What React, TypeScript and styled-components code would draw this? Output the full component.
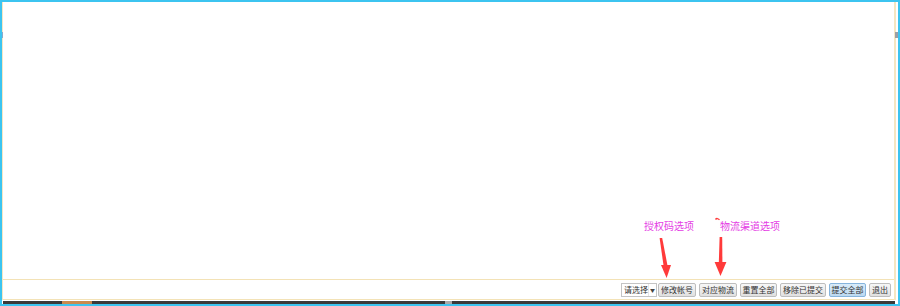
import React, { FunctionComponent } from 'react';
import styled, { createGlobalStyle } from 'styled-components';

const GlobalStyle = createGlobalStyle`
  html, body {
    margin: 0;
    padding: 0;
    background: #ffffff;
  }

  body {
    font-family: "Noto Sans CJK SC", "Noto Sans", sans-serif;
  }
`;

const Frame = styled.div`
  position: relative;
  box-sizing: border-box;
  display: flex;
  flex-direction: column;
  width: 900px;
  height: 306px;
  border: 2px solid #3cc4f0;
  background: #ffffff;
  overflow: hidden;
`;

const Inner = styled.div`
  display: flex;
  flex-direction: column;
  height: 298px;
  margin-right: 2px;
  border-left: 1px solid #f5e6c2;
  border-right: 2px solid #f5e6c2;
`;

const Main = styled.div`
  flex: 1;
`;

const Toolbar = styled.div`
  display: flex;
  align-items: flex-start;
  justify-content: flex-end;
  gap: 3px;
  box-sizing: border-box;
  height: 21px;
  padding: 3px 3px 0 0;
  border-top: 1px solid #f3e2b6;
  border-bottom: 1px solid #f3e2b6;
`;

const Select = styled.div`
  display: flex;
  align-items: center;
  box-sizing: border-box;
  width: 36px;
  height: 14px;
  margin-right: -2px;
  border: 1px solid #c4c4c4;
  background: #ffffff;
  color: #333333;
  font-size: 8px;
  line-height: 12px;
`;

const SelectText = styled.span`
  flex: 1;
  padding-left: 2px;
  white-space: nowrap;
`;

const SelectCaret = styled.span`
  width: 8px;
  height: 12px;
  border-left: 1px solid #e6e6e6;
  font-size: 5px;
  line-height: 12px;
  text-align: center;
  color: #444444;
`;

const Button = styled.button<{ $primary?: boolean; $w: number }>`
  box-sizing: border-box;
  width: ${(p) => p.$w}px;
  height: 14px;
  padding: 0;
  border: 1px solid ${(p) => (p.$primary ? '#86b4dc' : '#bdbdbd')};
  border-radius: 2px;
  background: ${(p) =>
    p.$primary
      ? 'linear-gradient(#d9ebf9, #bcd9f1)'
      : 'linear-gradient(#f7f7f7, #e0e0e0)'};
  color: #333333;
  font-family: "Noto Sans CJK SC", "Noto Sans", sans-serif;
  font-size: 8px;
  line-height: 12px;
  text-align: center;
  white-space: nowrap;
  overflow: hidden;
`;

const Scrollbar = styled.div`
  display: flex;
  height: 3px;
  margin: 1px 3px 0 1px;
  background: #3a3a3a;
`;

const ScrollThumb = styled.div`
  width: 30px;
  margin-left: 59px;
  background: #c98a4e;
`;

const ScrollMark = styled.div`
  width: 7px;
  margin-left: 353px;
  background: #a9a9a9;
`;

const Handle = styled.div<{ $side: 'left' | 'right' }>`
  position: absolute;
  top: 30px;
  ${(p) => (p.$side === 'left' ? 'left: -2px; width: 3px; background: #8ba9c9;' : 'right: -2px; width: 5px; background: #9b9fa6;')}
  height: 6px;
`;

const Note = styled.span<{ $left: number }>`
  position: absolute;
  top: 218px;
  left: ${(p) => p.$left}px;
  color: #e43ce4;
  font-size: 10px;
  line-height: 12px;
  white-space: nowrap;
`;

const Arrows = styled.svg`
  position: absolute;
  top: -2px;
  left: -2px;
  pointer-events: none;
`;

const tools = [
  { label: '修改帐号', w: 38 },
  { label: '对应物流', w: 38 },
  { label: '重置全部', w: 37 },
  { label: '移除已提交', w: 46 },
];

const App: FunctionComponent = () => (
  <>
    <GlobalStyle />
    <Frame>
      <Inner>
        <Main />
        <Toolbar>
          <Select>
            <SelectText>请选择</SelectText>
            <SelectCaret>▼</SelectCaret>
          </Select>
          {tools.map((tool) => (
            <Button key={tool.label} $w={tool.w}>{tool.label}</Button>
          ))}
          <Button $primary $w={37}>提交全部</Button>
          <Button $w={22}>退出</Button>
        </Toolbar>
      </Inner>
      <Scrollbar>
        <ScrollThumb />
        <ScrollMark />
      </Scrollbar>

      <Handle $side="left" />
      <Handle $side="right" />

      <Note $left={642}>授权码选项</Note>
      <Note $left={718}>物流渠道选项</Note>

      <Arrows width="900" height="306" viewBox="0 0 900 306">
        <g fill="#ff3a3a">
          <polygon points="659.6,238 662.2,238 667.6,266 663.6,266" />
          <polygon points="661,265 671,265 666.6,278" />
          <polygon points="719.6,237 722.2,237 722.4,263 718.8,263" />
          <polygon points="714.6,262 726.4,262 720.5,276" />
        </g>
        <path d="M715.5 219.5 Q717 217.5 719.5 219.8" stroke="#ff3a3a" strokeWidth="1.4" fill="none" />
      </Arrows>
    </Frame>
  </>
);

export default App;
